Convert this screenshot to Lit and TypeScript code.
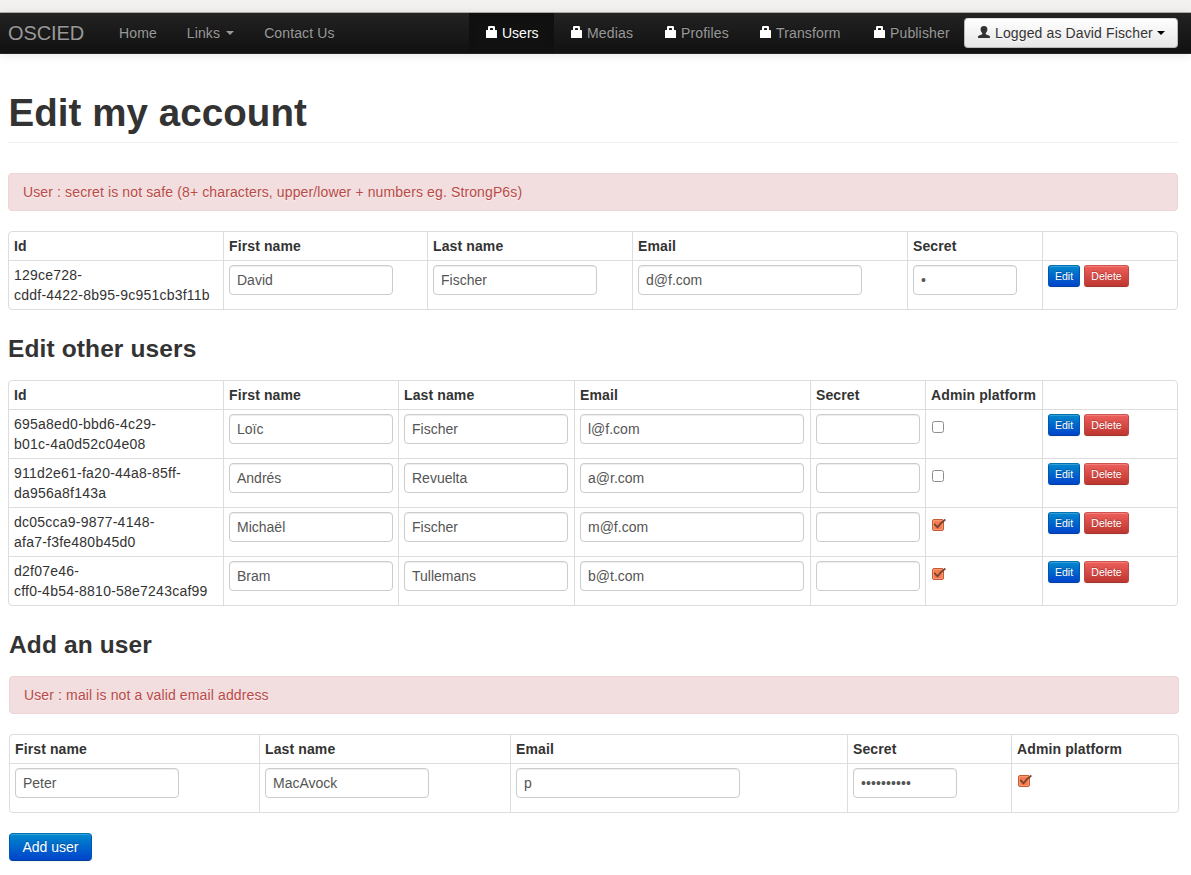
import { LitElement, html, css, svg, nothing } from "lit";
import { customElement } from "lit/decorators.js";
import { classMap } from "lit/directives/class-map.js";

interface User {
  id: string;
  first: string;
  last: string;
  email: string;
  secret: string;
  admin?: boolean;
}

const me: User = { id: "129ce728-\ncddf-4422-8b95-9c951cb3f11b", first: "David", last: "Fischer", email: "d@f.com", secret: "•" };

const others: User[] = [
  { id: "695a8ed0-bbd6-4c29-\nb01c-4a0d52c04e08", first: "Loïc", last: "Fischer", email: "l@f.com", secret: "", admin: false },
  { id: "911d2e61-fa20-44a8-85ff-\nda956a8f143a", first: "Andrés", last: "Revuelta", email: "a@r.com", secret: "", admin: false },
  { id: "dc05cca9-9877-4148-\nafa7-f3fe480b45d0", first: "Michaël", last: "Fischer", email: "m@f.com", secret: "", admin: true },
  { id: "d2f07e46-\ncff0-4b54-8810-58e7243caf99", first: "Bram", last: "Tullemans", email: "b@t.com", secret: "", admin: true },
];

const draft: User = { id: "", first: "Peter", last: "MacAvock", email: "p", secret: "••••••••••", admin: true };

const lock = html`<svg class="lock" width="11" height="12" viewBox="0 0 11 12">
  <path fill="#fff" fill-rule="evenodd" d="M.4 4H2V1.200Q2 0 3.200 0h4.600Q9 0 9 1.200V4h1.600l.4.400V12H0V4.400zM4 4h3V2.500L6.500 2h-2L4 2.500z"/>
</svg>`;

const person = html`<svg class="person" width="12" height="12" viewBox="0 0 12 12">
  <path fill="#333" d="M6 0c2.300 0 3.500 1.300 3.400 3.200-.1 1.800-.7 3-1.600 3.800-.3.500-.2 1.100.4 1.400l2.700 1.100c.8.400 1.100.8 1.100 1.500v1H0v-1c0-.7.300-1.100 1.100-1.500l2.700-1.100c.6-.3.700-.9.400-1.400-.9-.8-1.500-2-1.600-3.800C2.500 1.300 3.700 0 6 0z"/>
</svg>`;

const check = (on: boolean) => html`<svg class="check" width="15" height="13" viewBox="0 0 15 13">
  ${on
    ? svg`<rect x=".5" y="1.500" width="11" height="11" rx="1.500" fill="#f47c50" stroke="#c75a33"/>
        <rect x="1.500" y="2.500" width="9" height="9" rx=".5" fill="none" stroke="#f9a27d" stroke-opacity=".8"/>
        <path d="M2.200 5.800 5.600 9.300Q8.500 5 13.400 1.500" fill="none" stroke="#74422f" stroke-width="1.700"/>`
    : svg`<rect x=".5" y="1.500" width="11" height="11" rx="2" fill="#fff" stroke="#918e8a"/>`}
</svg>`;

@customElement("app-root")
export class AppRoot extends LitElement {
  static styles = css`
    :host { display: block; height: 875px; overflow: hidden; background: #fff; color: #333;
      font: 14px/20px "Liberation Sans", Arial, sans-serif; }
    * { box-sizing: border-box; }
    .chrome { height: 13px; background: #f2f1f0; border-bottom: 1px solid #b4aea8; }
    .navbar { height: 41px; display: flex; align-items: stretch; padding-right: 13px;
      background: linear-gradient(#222, #111); border-bottom: 1px solid #252525; box-shadow: 0 1px 10px rgba(0,0,0,.1);
      color: #999; text-shadow: 0 -1px 0 rgba(0,0,0,.25); white-space: nowrap; letter-spacing: .12px; }
    .brand { font-size: 20px; padding: 10px 20px 10px 8px; width: 104px; letter-spacing: -.1px; }
    .link { padding: 10px 15px; display: flex; }
    .spacer { flex: 1; }
    .caret { width: 0; height: 0; border: 4px solid transparent; border-top-color: currentColor; border-bottom: 0;
      margin: 8px 0 0 6px; }
    .tabs { display: grid; grid-template-columns: 85px 94px 95px 114px 107px; }
    .tab { padding: 10px 0 10px 17px; display: flex; gap: 5px; letter-spacing: .15px; }
    .tab.active { background: #111; color: #fff; box-shadow: inset 0 3px 8px rgba(0,0,0,.125); letter-spacing: 0; }
    .lock { margin-top: 3px; flex: none; }
    .account { align-self: flex-start; margin-top: 5px; width: 214px; height: 30px; border-radius: 4px; color: #333;
      border: 1px solid #b9b9b9; border-top-color: #e0e0e0; background: linear-gradient(#fff, #e6e6e6); padding: 4px 0 0 13px; display: flex;
      text-shadow: 0 1px 1px rgba(255,255,255,.75); letter-spacing: .13px; }
    .person { margin: 3px 5px 0 0; flex: none; }
    .account .caret { color: #000; margin-left: 4px; }
    main { padding: 39px 13px 0 8px; }
    h1, h3 { margin: 0; font-weight: bold; line-height: 40px; white-space: nowrap; }
    h1 { font-size: 38.5px; height: 50px; border-bottom: 1px solid #eee; letter-spacing: .07px; text-indent: .5px; }
    h3 { font-size: 24.5px; letter-spacing: .12px; line-height: 38px; height: 40px; }
    .alert { height: 38px; padding: 8px 14px; border: 1px solid #eed3d7; border-radius: 4px; background: #f2dede;
      color: #b94a48; text-shadow: 0 1px 0 rgba(255,255,255,.5); letter-spacing: .125px; }
    .mine { margin-top: 30px; }
    .table { margin-top: 20px; border: 1px solid #ddd; border-radius: 4px; }
    .row { display: grid; border-top: 1px solid #ddd; height: 49px; }
    .row.head { height: 28px; border-top: 0; font-weight: bold; letter-spacing: .12px; }
    .me .row { grid-template-columns: 214px 204px 205px 275px 135px 135px; }
    .others .row { grid-template-columns: 214px 175px 176px 236px 115px 117px 135px; }
    .add .row { grid-template-columns: 249px 251px 337px 164px 167px; }
    .cell { border-left: 1px solid #ddd; padding: 4px 5px; white-space: pre; min-width: 0; }
    .cell:first-child { border-left: 0; }
    .cell.id { letter-spacing: .23px; }
    .field { width: 164px; height: 30px; border: 1px solid #ccc; border-radius: 4px; padding: 4px 7px; color: #555;
      background: #fff; box-shadow: inset 0 1px 1px rgba(0,0,0,.075); }
    .field.email { width: 224px; }
    .field.secret { width: 104px; letter-spacing: .1px; }
    .check { display: block; margin: 6px 0 0 1px; }
    .actions { display: flex; gap: 4px; }
    .btn { border: 1px solid; border-radius: 3px; color: #fff; text-align: center; text-shadow: 0 -1px 0 rgba(0,0,0,.25);
      box-shadow: inset 0 1px 0 rgba(255,255,255,.2), 0 1px 2px rgba(0,0,0,.05); }
    .btn.mini { height: 22px; font-size: 10.5px; width: 32px; }
    .btn.edit { background: linear-gradient(#08c, #04c); border-color: #0074b3 #0057b0 #003fa0; }
    .btn.delete { background: linear-gradient(#ee5f5b, #bd362f); border-color: #d0524e #bd4743 #a2332d; width: 45px; }
    .btn.large { width: 83px; height: 28px; line-height: 26px; margin-top: 20px; border-radius: 4px; }
    .others-title { margin-top: 20px; }
    .others { margin-top: 10px; }
    .new { margin: 20px -1px 0 1px; }
    .new .alert { margin-top: 10px; }
  `;

  private field(value: string, kind = "") {
    return html`<div class="cell"><div class=${classMap({ field: true, [kind || "text"]: true })}>${value}</div></div>`;
  }

  private row(u: User, actions = true) {
    return html`<div class="row">
      ${u.id ? html`<div class="cell id">${u.id}</div>` : nothing}
      ${this.field(u.first)}${this.field(u.last)}${this.field(u.email, "email")}${this.field(u.secret, "secret")}
      ${u.admin === undefined ? nothing : html`<div class="cell">${check(u.admin)}</div>`}
      ${actions ? html`<div class="cell actions"><div class="btn mini edit">Edit</div><div class="btn mini delete">Delete</div></div>` : nothing}
    </div>`;
  }

  private head(labels: string[]) {
    return html`<div class="row head">${labels.map((l) => html`<div class="cell">${l}</div>`)}</div>`;
  }

  render() {
    return html`
      <div class="chrome"></div>
      <nav class="navbar">
        <div class="brand">OSCIED</div>
        <div class="link">Home</div>
        <div class="link">Links<span class="caret"></span></div>
        <div class="link">Contact Us</div>
        <div class="spacer"></div>
        <div class="tabs">
          ${["Users", "Medias", "Profiles", "Transform", "Publisher"].map(
            (t, i) => html`<div class=${classMap({ tab: true, active: i === 0 })}>${lock}<span>${t}</span></div>`,
          )}
        </div>
        <div class="account">${person}<span>Logged as David Fischer</span><span class="caret"></span></div>
      </nav>
      <main>
        <h1>Edit my account</h1>
        <div class="alert mine">User : secret is not safe (8+ characters, upper/lower + numbers eg. StrongP6s)</div>
        <div class="table me">
          ${this.head(["Id", "First name", "Last name", "Email", "Secret", ""])}
          ${this.row(me)}
        </div>
        <h3 class="others-title">Edit other users</h3>
        <div class="table others">
          ${this.head(["Id", "First name", "Last name", "Email", "Secret", "Admin platform", ""])}
          ${others.map((u) => this.row(u))}
        </div>
        <section class="new">
          <h3>Add an user</h3>
          <div class="alert">User : mail is not a valid email address</div>
          <div class="table add">
            ${this.head(["First name", "Last name", "Email", "Secret", "Admin platform"])}
            ${this.row(draft, false)}
          </div>
          <div class="btn edit large">Add user</div>
        </section>
      </main>
    `;
  }
}
